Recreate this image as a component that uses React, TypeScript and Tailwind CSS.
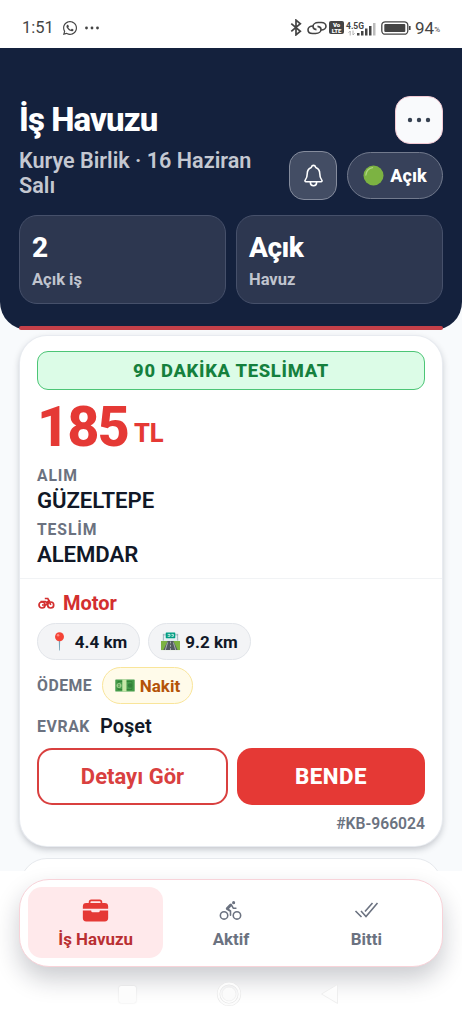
import React from "react";
import { FaWhatsapp } from "react-icons/fa";
import { IoBicycle, IoBriefcase, IoNotificationsOutline } from "react-icons/io5";

const StatusBar = () => (
  <div className="flex h-12 shrink-0 items-center bg-white px-[22px] pt-[7px] text-[#444]">
    <span className="w-8 text-[16.5px] leading-5">1:51</span>
    <FaWhatsapp className="ml-2 size-4" />
    <svg viewBox="0 0 14 4" className="ml-[7px] h-1 w-3.5" fill="currentColor">
      <circle cx="1.5" cy="2" r="1.4" />
      <circle cx="7" cy="2" r="1.4" />
      <circle cx="12.5" cy="2" r="1.4" />
    </svg>
    <div className="ml-auto flex items-center">
      <svg viewBox="0 0 12 18" className="mr-[5px] h-[17px] w-3" fill="none" stroke="currentColor" strokeWidth="1.8">
        <path d="M1 4.8 10.6 13 6 16.8V1.2L10.6 5 1 13.2" />
      </svg>
      <svg viewBox="0 0 20 14" className="h-3.5 w-5" fill="none" stroke="currentColor" strokeWidth="1.6">
        <path d="M6 5C3 5 1 6.700 1 8.800 1 11 2.900 12.500 5.500 12.500h3.200C12 12.500 14 10.500 14 8.500 14 6.800 12.500 5.600 10.500 5.400" />
        <path d="M14 9c3 0 5-1.700 5-3.800C19 3 17.100 1.500 14.500 1.500h-3.200C8 1.500 6 3.500 6 5.500 6 7.200 7.500 8.400 9.500 8.600" />
      </svg>
      <div className="ml-[2px] flex h-[13px] w-[15px] flex-col items-center justify-center rounded-[2px] bg-[#444] text-[6px] leading-[5.5px] font-black text-white">
        <span>Vo</span>
        <span>LTE</span>
      </div>
      <div className="ml-[2px] flex h-4 w-[30px] items-end justify-between">
        <div className="flex w-[10px] flex-col">
          <span className="text-[8.5px] leading-[8px] font-bold">4.5G</span>
          <svg viewBox="0 0 8 6" className="ml-[2px] h-[6px] w-2" fill="none" stroke="#aaa" strokeWidth="0.9">
            <path d="M2.2 5.5V1L.5 2.7M5 .5V5l1.7-1.7" />
          </svg>
        </div>
        <svg viewBox="0 0 19 14" className="h-3.5 w-[19px]" fill="currentColor">
          <rect x="0" y="11" width="2.5" height="2.5" />
          <rect x="4" y="9" width="2.5" height="4.5" />
          <rect x="8" y="6.5" width="2.5" height="7" />
          <rect x="12" y="4" width="2.5" height="9.5" />
          <rect x="16" y="1" width="2.5" height="12.5" fill="#bbb" />
        </svg>
      </div>
      <svg viewBox="0 0 31 14" className="ml-[5px] h-3.5 w-[31px]" fill="none">
        <rect x=".8" y=".8" width="26" height="12.4" rx="3.5" stroke="#444" strokeWidth="1.3" />
        <rect x="3.3" y="3" width="21" height="8" rx="1" fill="#444" />
        <path d="M28.8 5v4" stroke="#444" strokeWidth="1.6" />
      </svg>
      <span className="ml-[3px] text-[17px] leading-5">94</span>
      <span className="mt-[5px] text-[8px] leading-3">%</span>
    </div>
  </div>
);

const Stat = ({ value, label }: { value: string; label: string }) => (
  <div className="h-[89px] rounded-[18px] border border-[#46506a] bg-[#2d3750] px-3 pt-[15px]">
    <div className="text-[28px] leading-[34px] font-extrabold tracking-[-0.5px] text-white">{value}</div>
    <div className="mt-[4px] text-[16.5px] leading-[22px] font-bold text-[#c0c4ce]">{label}</div>
  </div>
);

const Header = () => (
  <header className="h-[282px] shrink-0 rounded-b-[28px] bg-[#14213d] px-[19px] pt-12">
    <div className="flex h-12 items-center justify-between">
      <h1 className="text-[33px] leading-10 font-extrabold tracking-[-0.9px] text-white">İş Havuzu</h1>
      <button className="flex size-12 items-center justify-center rounded-[15px] border border-[#f3c9d3] bg-[#f9fafc]">
        <svg viewBox="0 0 24 6" className="h-1.5 w-6" fill="#374151">
          <circle cx="3" cy="3" r="2.2" />
          <circle cx="12" cy="3" r="2.2" />
          <circle cx="21" cy="3" r="2.2" />
        </svg>
      </button>
    </div>
    <div className="mt-[3px] flex h-[56px] items-center">
      <p className="-mt-[5px] w-[270px] pr-4 text-[21.6px] leading-[25px] font-semibold text-[#c4c8d1]">
        Kurye Birlik · 16 Haziran Salı
      </p>
      <button className="flex h-[49px] w-12 items-center justify-center rounded-[15px] border border-[#858c9d] bg-[#434d64]">
        <IoNotificationsOutline className="size-[25px] text-white" />
      </button>
      <button className="ml-[10px] flex h-[47px] w-24 items-center justify-center gap-[6px] rounded-full border border-[#727a8d] bg-[#37415a]">
        <svg viewBox="0 0 22 22" className="size-[21px]">
          <circle cx="11" cy="11" r="10.5" fill="#7cb342" />
          <path d="M3 10.5C3.5 6 6 3.500 10 2.800" fill="none" stroke="#aed581" strokeWidth="1.3" strokeLinecap="round" />
        </svg>
        <span className="mt-[2px] text-[18px] leading-6 font-extrabold text-white">Açık</span>
      </button>
    </div>
    <div className="mt-[12px] grid grid-cols-2 gap-[10px]">
      <Stat value="2" label="Açık iş" />
      <Stat value="Açık" label="Havuz" />
    </div>
    <div className="mt-[22px] h-1 rounded-sm bg-[#c54049]" />
  </header>
);

const PinIcon = () => (
  <svg viewBox="0 0 20 20" className="size-[19px]">
    <path d="M9.300 9h1.400l-.3 10.500h-.8z" fill="#78a5b8" />
    <circle cx="10" cy="5" r="4.700" fill="#f44336" />
    <circle cx="8.500" cy="3.400" r="1.300" fill="#ff8a80" />
  </svg>
);

const MotorwayIcon = () => (
  <svg viewBox="0 0 20 20" className="size-[19px]">
    <path d="M1 10 3 1h14l2 9z" fill="#e3eef1" />
    <path d="M0 9.500h20V19H0z" fill="#7cb342" />
    <path d="M7 9.500h6L17.500 19h-15z" fill="#535b61" />
    <path d="M10 10v2m0 1.500v2m0 1.500v2M7 11 4.500 19M13 11l2.500 8" stroke="#d5d8da" strokeWidth=".7" />
    <path d="M2.500 9V2M17.500 9V2M2 3h16" stroke="#90a4ae" strokeWidth=".8" />
    <rect x="5" y=".5" width="10" height="6" rx=".6" fill="#009e83" />
    <path d="M7 2.500h2.500v2H7m4-2h2v2h-2" fill="none" stroke="#fff" strokeWidth=".8" />
  </svg>
);

const CashIcon = () => (
  <svg viewBox="0 0 20 13" className="h-[13px] w-5">
    <rect x=".3" y=".5" width="19.4" height="12" rx=".6" fill="#459b4b" />
    <path d="M3 2.500h14v8H3z" fill="none" stroke="#2e7d32" strokeWidth=".8" />
    <rect x="7.300" y=".5" width="4.200" height="12" fill="#c6e8a8" />
    <circle cx="4" cy="6.500" r="2.500" fill="#9ccc8b" />
    <path d="M4.800 5.500c-1.600-.7-2 .7-.8 1s.8 1.500-.9 1" fill="none" stroke="#2e7d32" strokeWidth=".6" />
    <circle cx="15" cy="6.500" r="2.300" fill="#33803b" />
  </svg>
);

const MotorbikeIcon = () => (
  <svg viewBox="0 0 18 13" className="h-[13px] w-[18px]" fill="none" stroke="#d32f2f" strokeWidth="1.7">
    <circle cx="5" cy="8" r="3" />
    <circle cx="13.700" cy="8" r="3" />
    <path d="M7.800 1.500h3l3 6.300M3.500 4.500h4.800l1.500 1 3-2.300M5 8h4l2.500-3.200" />
  </svg>
);

const Chip = ({ icon, text, className }: { icon: React.ReactNode; text: string; className: string }) => (
  <div className={`flex h-[37px] items-center justify-center rounded-full border text-[17px] leading-6 ${className}`}>
    {icon}
    <span>{text}</span>
  </div>
);

const Stop = ({ label, place }: { label: string; place: string }) => (
  <div className="h-[54px]">
    <div className="text-[15.7px] leading-[22px] font-bold tracking-[0.9px] text-[#6b7280]">{label}</div>
    <div className="text-[22.2px] leading-[26px] font-semibold tracking-[-0.1px] text-[#111827]">{place}</div>
  </div>
);

const JobCard = () => (
  <article className="mx-5 mt-[6px] h-[510px] shrink-0 rounded-[27px] bg-white pt-[15px] shadow-[0_0_0_1px_#e8ebf0,0_3px_7px_rgba(17,24,39,0.25)]">
    <div className="px-[17px]">
      <div className="flex h-[39px] items-center justify-center rounded-[11px] border border-[#4cc576] bg-[#dcfce7] text-[18.4px] font-extrabold tracking-[0.7px] text-[#15803d]">
        90 DAKİKA TESLİMAT
      </div>
      <div className="flex h-[75px] items-start text-[#e53935]">
        <span className="pt-[7px] text-[56px] leading-[60px] font-extrabold tracking-[-2px]">185</span>
        <span className="ml-[6px] pt-[28px] text-[25.5px] leading-[30px] font-extrabold">TL</span>
      </div>
      <Stop label="ALIM" place="GÜZELTEPE" />
      <Stop label="TESLİM" place="ALEMDAR" />
    </div>
    <div className="mt-[5px] border-t border-[#f1f3f5]" />
    <div className="px-[17px] pt-[12px]">
      <div className="flex h-6 items-center gap-[8px] text-[20px] font-bold text-[#d32f2f]">
        <MotorbikeIcon />
        Motor
      </div>
      <div className="mt-[8px] flex gap-2">
        <Chip className="w-[103px] gap-[6px] border-[#e2e5ea] bg-[#f3f4f6] font-bold text-[#111827]" icon={<PinIcon />} text="4.4 km" />
        <Chip className="w-[103px] gap-[5px] border-[#e2e5ea] bg-[#f3f4f6] font-bold text-[#111827]" icon={<MotorwayIcon />} text="9.2 km" />
      </div>
      <div className="mt-[7px] flex items-center">
        <span className="mt-px w-[65px] text-[15.8px] font-bold tracking-[0.5px] text-[#6b7280]">ÖDEME</span>
        <Chip className="w-[91px] gap-[5px] border-[#f9e59a] bg-[#fffbea] font-bold text-[#b45309]" icon={<CashIcon />} text="Nakit" />
      </div>
      <div className="mt-[8px] flex h-[28px] items-center">
        <span className="mt-[2px] w-[63px] text-[15.8px] font-bold tracking-[0.6px] text-[#6b7280]">EVRAK</span>
        <span className="text-[20px] leading-6 font-semibold text-[#111827]">Poşet</span>
      </div>
      <div className="mt-[8px] flex gap-[9px]">
        <button className="h-[57px] w-[191px] rounded-[15px] border-2 border-[#d9403f] text-[22px] font-bold text-[#d9403f]">
          Detayı Gör
        </button>
        <button className="h-[57px] flex-1 rounded-[15px] bg-[#e53935] text-[22.3px] font-extrabold tracking-[0.5px] text-white">
          BENDE
        </button>
      </div>
      <div className="mt-[8px] text-right text-[15.7px] leading-[22px] font-semibold text-[#6b7280]">#KB-966024</div>
    </div>
  </article>
);

const Tab = ({ icon, label, active }: { icon: React.ReactNode; label: string; active?: boolean }) => (
  <button
    className={`flex h-[71px] flex-1 flex-col items-center rounded-[14px] pt-[10px] text-[16.9px] leading-[22px] font-bold ${
      active ? "bg-[#ffe9eb] text-[#b92f32]" : "text-[#6b7280]"
    }`}
  >
    <span className="flex h-[26px] items-center">{icon}</span>
    <span className="mt-[5px]">{label}</span>
  </button>
);

const DoneIcon = () => (
  <svg viewBox="0 0 25 18" className="h-[18px] w-[25px]" fill="none" stroke="currentColor" strokeWidth="1.6">
    <path d="m1.500 10 6 6M7 10l5 5.500L23.500 2M11 10.500 18.500 2" />
  </svg>
);

const TabBar = () => (
  <nav className="mx-[19px] flex h-[88px] rounded-[30px] border border-[#f8d3d9] bg-white px-2 py-[7px] shadow-[0_12px_24px_rgba(17,24,39,0.22)]">
    <Tab active icon={<IoBriefcase className="size-[27px] text-[#e53935]" />} label="İş Havuzu" />
    <Tab icon={<IoBicycle className="size-[25px]" />} label="Aktif" />
    <Tab icon={<DoneIcon />} label="Bitti" />
  </nav>
);

const SystemNav = () => (
  <div className="mt-[9px] flex h-9 items-center pl-[119px]">
    <div className="size-[17px] rounded-[2px] bg-[#fcfcfc] shadow-[0_0_2px_rgba(0,0,0,0.12)]" />
    <svg viewBox="0 0 26 26" className="ml-[80px] size-[26px]" fill="none">
      <circle cx="13" cy="13" r="10.5" stroke="#e6e6e6" strokeWidth="3.2" />
      <circle cx="13" cy="13" r="10.5" stroke="#fcfcfc" strokeWidth="2" />
      <circle cx="13" cy="13" r="7" fill="#fbfbfb" stroke="#ebebeb" strokeWidth=".7" />
    </svg>
    <svg viewBox="0 0 20 22" className="ml-[78px] h-[22px] w-5">
      <path d="M1.500 11 17.500 1.500v19z" fill="#fcfcfc" stroke="#ebebeb" strokeWidth=".8" />
    </svg>
  </div>
);

export default function App() {
  return (
    <div className="flex h-[1024px] w-[462px] flex-col overflow-hidden bg-[#f8fafc] font-['Roboto',sans-serif]">
      <StatusBar />
      <Header />
      <JobCard />
      {/* top edge of the next job, cut off by the bottom bar */}
      <div className="mx-5 mt-[12px] h-[13px] shrink-0 overflow-hidden">
        <div className="h-20 rounded-[27px] border border-[#e6e9ed] bg-white" />
      </div>
      <div className="flex-1 bg-white pt-2">
        <TabBar />
        <SystemNav />
      </div>
    </div>
  );
}
